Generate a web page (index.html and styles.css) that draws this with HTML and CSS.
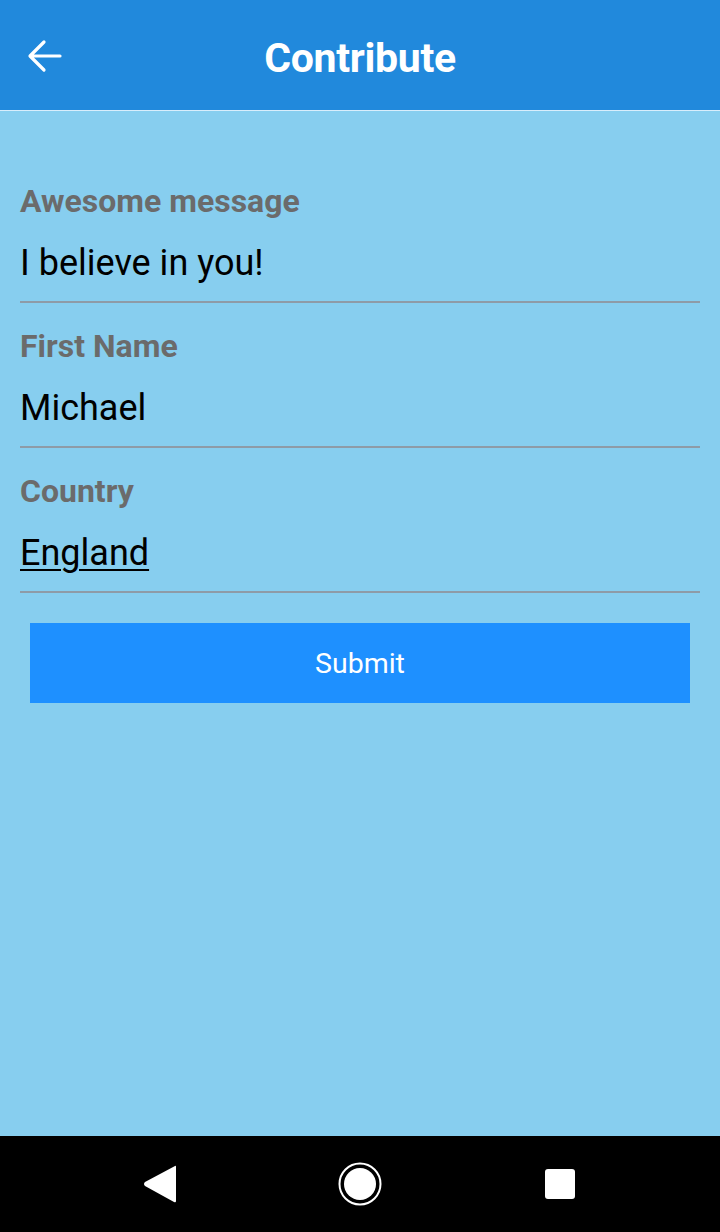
FILE: index.html
```html
<!DOCTYPE html>
<html>
<head>
<meta charset="utf-8">
<link rel="stylesheet" href="styles.css">
</head>
<body>
<div class="screen">
  <header class="appbar">
    <svg class="back" width="36" height="36" viewBox="0 0 36 36">
      <path d="M34 18 H6 M18 4 L4 18 L18 32" fill="none" stroke="#fff" stroke-width="3.2" stroke-linecap="round" stroke-linejoin="round"/>
    </svg>
    <h1 class="title">Contribute</h1>
  </header>
  <main class="content">
    <div class="field">
      <div class="label">Awesome message</div>
      <div class="value">I believe in you!</div>
    </div>
    <div class="field">
      <div class="label">First Name</div>
      <div class="value">Michael</div>
    </div>
    <div class="field">
      <div class="label">Country</div>
      <div class="value"><span class="link">England</span></div>
    </div>
    <button class="submit">Submit</button>
  </main>
  <nav class="navbar">
    <svg width="40" height="40" viewBox="0 0 40 40"><path d="M35 2 Q36 1 36 3 V37 Q36 39 34 38 L5 22 Q3 20 5 18 Z" fill="#fff"/></svg>
    <svg width="46" height="46" viewBox="0 0 46 46"><circle cx="23" cy="23" r="20.5" fill="none" stroke="#fff" stroke-width="2"/><circle cx="23" cy="23" r="16" fill="#fff"/></svg>
    <svg width="32" height="32" viewBox="0 0 32 32"><rect x="1" y="1" width="30" height="30" rx="3" fill="#fff"/></svg>
  </nav>
</div>
</body>
</html>
```
FILE: styles.css
```css
* { box-sizing: border-box; }
html, body { margin: 0; padding: 0; }
body { font-family: Roboto, "Liberation Sans", sans-serif; }
.screen {
  width: 720px;
  height: 1232px;
  display: flex;
  flex-direction: column;
  background: #87ceef;
}
.appbar {
  height: 111px;
  flex: none;
  background: #2189dc;
  border-bottom: 1px solid #d9eefc;
  display: flex;
  align-items: center;
  justify-content: center;
  padding-top: 5px;
  position: relative;
}
.back { position: absolute; left: 26px; top: 38px; }
.title {
  margin: 0;
  color: #fff;
  font-size: 41px;
  font-weight: 700;
  letter-spacing: -0.3px;
}
.content {
  flex: 1;
  padding: 47px 20px 0;
  display: flex;
  flex-direction: column;
}
.field {
  border-bottom: 2px solid #8e9ba7;
  height: 145px;
  padding-top: 25px;
}
.label {
  color: #6b6b6b;
  font-weight: 700;
  font-size: 32px;
  line-height: 36px;
}
.value {
  color: #000;
  font-size: 36px;
  line-height: 40px;
  margin-top: 24px;
}
.link { text-decoration: underline; text-underline-offset: 4px; text-decoration-thickness: 2px; }
.submit {
  margin: 30px 10px 0;
  height: 80px;
  border: none;
  background: #1e90ff;
  color: #fff;
  font-family: Roboto, "Liberation Sans", sans-serif;
  font-size: 28.5px;
}
.navbar {
  height: 96px;
  flex: none;
  background: #000;
  display: grid;
  grid-template-columns: repeat(3, 200px);
  justify-items: center;
  align-items: center;
  padding: 0 60px;
}
```
